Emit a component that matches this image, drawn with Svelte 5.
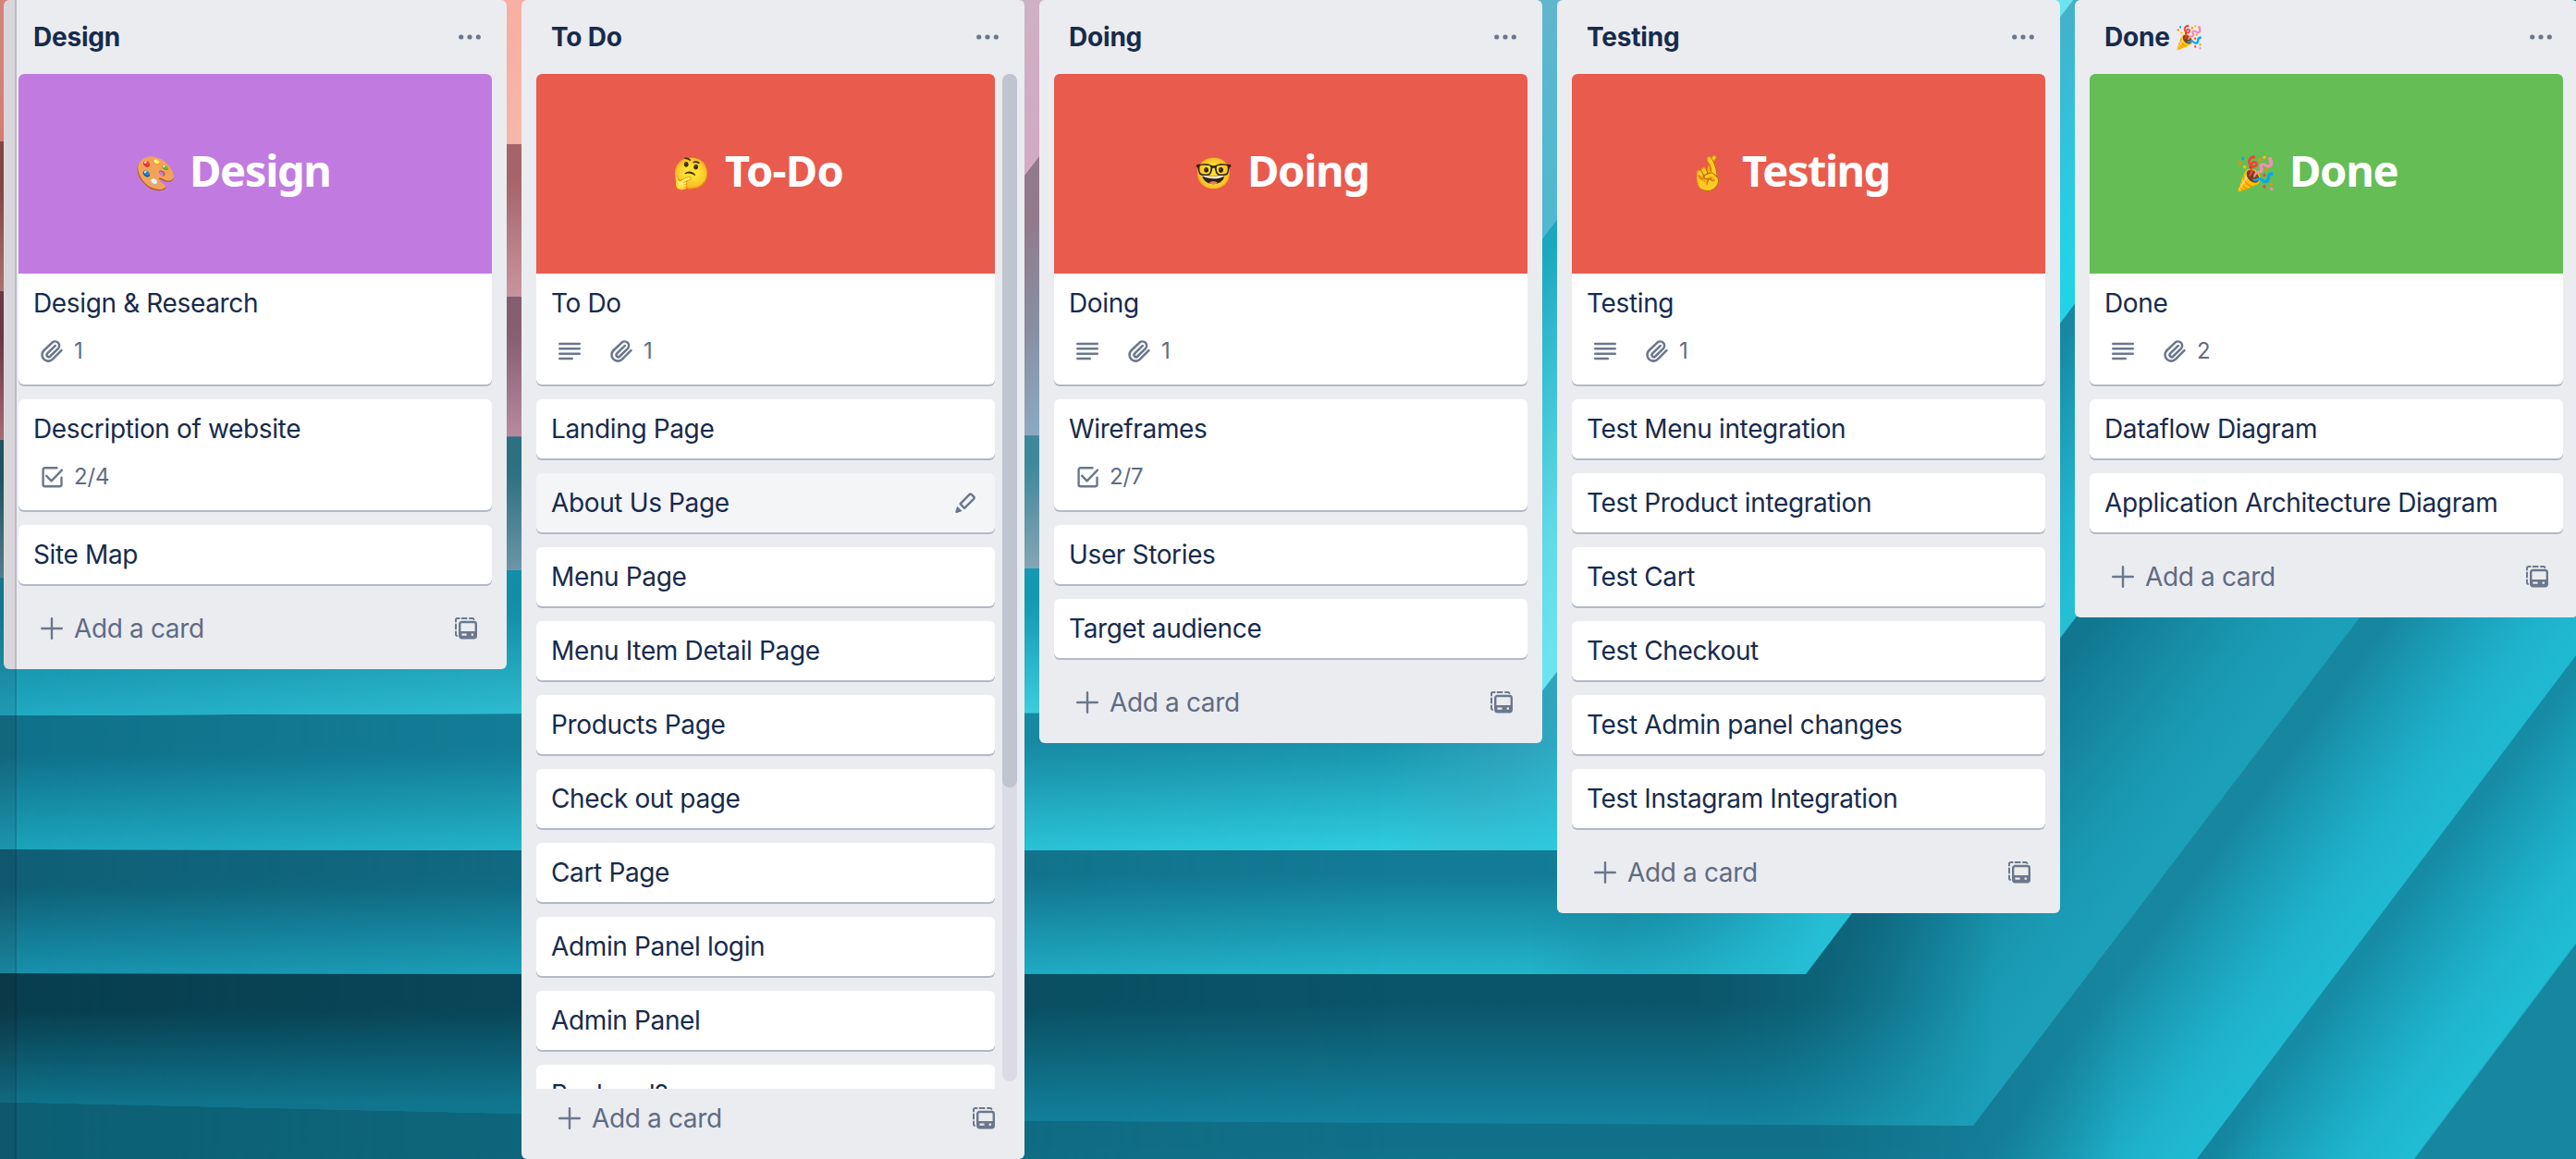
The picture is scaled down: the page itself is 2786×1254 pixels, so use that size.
<script>
  const lists = [
    {
      title: 'Design',
      cover: { tone: 'purple', emoji: '🎨', label: 'Design', kind: 'design' },
      cards: [
        { title: 'Design & Research', cover: true, files: 1 },
        { title: 'Description of website', checks: '2/4' },
        { title: 'Site Map' }
      ]
    },
    {
      title: 'To Do',
      scroll: true,
      cover: { tone: 'red', emoji: '🤔', label: 'To-Do', kind: 'todo' },
      cards: [
        { title: 'To Do', cover: true, text: true, files: 1 },
        { title: 'Landing Page' },
        { title: 'About Us Page', active: true },
        { title: 'Menu Page' },
        { title: 'Menu Item Detail Page' },
        { title: 'Products Page' },
        { title: 'Check out page' },
        { title: 'Cart Page' },
        { title: 'Admin Panel login' },
        { title: 'Admin Panel' },
        { title: 'Backend?' }
      ]
    },
    {
      title: 'Doing',
      cover: { tone: 'red', emoji: '🤓', label: 'Doing', kind: 'doing' },
      cards: [
        { title: 'Doing', cover: true, text: true, files: 1 },
        { title: 'Wireframes', checks: '2/7' },
        { title: 'User Stories' },
        { title: 'Target audience' }
      ]
    },
    {
      title: 'Testing',
      cover: { tone: 'red', emoji: '🤞', label: 'Testing', kind: 'testing' },
      cards: [
        { title: 'Testing', cover: true, text: true, files: 1 },
        { title: 'Test Menu integration' },
        { title: 'Test Product integration' },
        { title: 'Test Cart' },
        { title: 'Test Checkout' },
        { title: 'Test Admin panel changes' },
        { title: 'Test Instagram Integration' }
      ]
    },
    {
      title: 'Done',
      suffix: '🎉',
      cover: { tone: 'green', emoji: '🎉', label: 'Done', kind: 'done' },
      cards: [
        { title: 'Done', cover: true, text: true, files: 2 },
        { title: 'Dataflow Diagram' },
        { title: 'Application Architecture Diagram' }
      ]
    }
  ];

  // Folded paper sheets, outermost first. Each has a bottom edge (yl..y), a corner
  // at (x, y) and a diagonal rising to (tx, 0). `top` is where the sheet above ends.
  const sheets = [
    { yl: 1600, y: 1600, x: 2352, tx: 3552, top: 1400, w: 190, l: ['#0f6b80', '#0f6b80'], r: ['#0f6b80', '#0f6b80'], d: ['#1786a0', '#1aa3bc'] },
    { yl: 1500, y: 1500, x: 2426, tx: 3551, top: 1300, w: 185, l: ['#0f6b80', '#0f6b80'], r: ['#0f6b80', '#0f6b80'], d: ['#168ba6', '#20bcd4'] },
    { yl: 1400, y: 1400, x: 2266, tx: 3319, top: 1198, w: 195, l: ['#0d5f73', '#128aa5'], r: ['#117089', '#128aa5'], d: ['#1786a1', '#20b9d2'] },
    { yl: 1192, y: 1218, x: 2134, tx: 3060, top: 1053, w: 240, l: ['#083e4f', '#0f7289'], r: ['#0b5569', '#1484a0'], d: ['#11768f', '#1ca0ba'] },
    { yl: 1053, y: 1054, x: 1953, tx: 2750, top: 919, w: 205, l: ['#0f5f76', '#1790ab'], r: ['#137b95', '#22b5cc'], d: ['#1787a2', '#25bfd5'] },
    { yl: 919, y: 920, x: 1800, tx: 2490, top: 773, w: 205, l: ['#107089', '#1ba3bc'], r: ['#1993ac', '#2fcde0'], d: ['#45b0ca', '#22d3e8'] },
    { yl: 774, y: 771, x: 1650, tx: 2242, top: 620, w: 300, l: ['#10829c', '#1fa9c2'], r: ['#17a0b9', '#45d8e6'], d: ['#1ba7c0', '#6ce4ef'] },
    { yl: 625, y: 614, x: 1395, tx: 1866, top: 473, w: 245, l: ['#1c5b6b', '#55889b'], r: ['#3f889d', '#88a9b7'], d: ['#70b3ca', '#50b8d0'] },
    { yl: 476, y: 471, x: 1190, tx: 1550, top: 322, w: 215, l: ['#733b4c', '#b4747f'], r: ['#93798c', '#bc9dba'], d: ['#93798c', '#74b6cc'] },
    { yl: 314, y: 322, x: 1006, tx: 1254, top: 155, w: 160, l: ['#8b4a50', '#b9787d'], r: ['#b07074', '#cfa0b0'], d: ['#cdb5c6', '#d2aac4'] },
    { yl: 153, y: 156, x: 830, tx: 950, top: 0, w: 500, l: ['#e58f83', '#e58878'], r: ['#fbb3a8', '#f9bcb0'], d: ['#f8b8ac', '#f9c4ba'] }
  ];

  function outline(s) {
    return `M-10 -10 L${s.tx + 8} -10 L${s.x} ${s.y} L${s.x * 0.4} ${s.y + (s.yl - s.y) * 0.25} L-10 ${s.yl} Z`;
  }

  // Gradient vector perpendicular to a sheet's diagonal, pointing inwards.
  function across(s) {
    const dx = s.tx - s.x;
    const len = Math.hypot(dx, s.y);
    return { x2: s.x - (s.y / len) * s.w, y2: s.y - (dx / len) * s.w };
  }
</script>

{#snippet textIcon()}
  <svg class="icon" viewBox="0 0 24 24"><path d="M1.2 4h21.6M1.2 9.3h21.6M1.2 14.7h21.6M1.2 20h13.6" /></svg>
{/snippet}

{#snippet clipIcon()}
  <svg class="icon" viewBox="0.8 0.8 22.6 22.6"><path d="M21.9 11.3l-8.9 8.9a6.2 6.2 0 0 1-9-8.8l8.600-8.200a4.300 4.300 0 0 1 6.200 5.900l-8.300 8.200a2 2 0 0 1-2.900-2.900l8-7.900" /></svg>
{/snippet}

{#snippet checkIcon()}
  <svg class="icon" viewBox="0 0 24 24"><path d="M17.5 2.3H4.600a2 2 0 0 0-2 2v15.900a2 2 0 0 0 2 2h15.900a2 2 0 0 0 2-2v-7.400M6.200 10.800l5.400 5.600L23 4.600" /></svg>
{/snippet}

{#snippet templateIcon()}
  <svg class="icon" viewBox="0 0 24 24">
    <path class="dashes" d="M1 4.4V2.6A1.6 1.6 0 0 1 2.6 1h2M7.6 1h5M16 1h2.8a1.6 1.6 0 0 1 1.6 1M1 7.4v5.2M1 15.6v2.8a1.6 1.6 0 0 0 1 1.5" />
    <rect x="5.2" y="5" width="17.6" height="17.2" rx="2.2" />
    <path class="solid" fill-rule="evenodd" d="M5 15h18v7H5zM7.4 17.6h5.2v2.2H7.4zM17.6 17.6h2.4v2.2h-2.4z" />
  </svg>
{/snippet}

<div class="board">
  <svg class="backdrop" viewBox="0 0 2786 1254" preserveAspectRatio="none" aria-hidden="true">
    <defs>
      {#each sheets as s, i}
        {@const g = across(s)}
        <linearGradient id="d{i}" gradientUnits="userSpaceOnUse" x1={s.x} y1={s.y} x2={g.x2} y2={g.y2}>
          <stop offset="0.05" stop-color={s.d[1]} />
          <stop offset="0.3" stop-color={s.d[1]} stop-opacity="0.85" />
          <stop offset="0.95" stop-color={s.d[0]} />
        </linearGradient>
        <linearGradient id="r{i}" gradientUnits="userSpaceOnUse" x1="0" y1={s.top} x2="0" y2={s.y}>
          <stop offset="0.2" stop-color={s.r[0]} />
          <stop offset="1" stop-color={s.r[1]} />
        </linearGradient>
        <linearGradient id="l{i}" gradientUnits="userSpaceOnUse" x1="0" y1={s.top} x2="0" y2={s.yl}>
          <stop offset="0.3" stop-color={s.l[0]} />
          <stop offset="1" stop-color={s.l[1]} />
        </linearGradient>
        <linearGradient id="f{i}" gradientUnits="userSpaceOnUse" x1={s.x - 300} y1="0" x2={s.x + 20} y2="0">
          <stop offset="0" stop-color="#fff" />
          <stop offset="1" stop-color="#000" />
        </linearGradient>
        <linearGradient id="g{i}" gradientUnits="userSpaceOnUse" x1="0" y1="0" x2={Math.min(1500, s.x - 200)} y2="0">
          <stop offset="0" stop-color="#fff" />
          <stop offset="1" stop-color="#000" />
        </linearGradient>
        <mask id="m{i}" maskUnits="userSpaceOnUse" x="-10" y="-10" width="3600" height="1700">
          <rect x="-10" y="-10" width="3600" height="1700" fill="url(#f{i})" />
        </mask>
        <mask id="n{i}" maskUnits="userSpaceOnUse" x="-10" y="-10" width="3600" height="1700">
          <rect x="-10" y="-10" width="3600" height="1700" fill="url(#g{i})" />
        </mask>
      {/each}
    </defs>
    <rect width="2786" height="1254" fill="#1787a1" />
    {#each sheets as s, i}
      <path d={outline(s)} fill={s.d[0]} />
      <path d={outline(s)} fill="url(#d{i})" />
      <path d={outline(s)} fill="url(#r{i})" mask="url(#m{i})" />
      <path d={outline(s)} fill="url(#l{i})" mask="url(#n{i})" />
    {/each}
  </svg>

  <main class="lists">
    {#each lists as list}
      <section class="list" class:scroll={list.scroll}>
        <header class="list-head">
          <h2>{list.title}{#if list.suffix}<span class="suffix">{list.suffix}</span>{/if}</h2>
          <svg class="more" viewBox="0 0 24 6"><circle cx="2.7" cy="3" r="2.6" /><circle cx="12" cy="3" r="2.6" /><circle cx="21.3" cy="3" r="2.6" /></svg>
        </header>
        <div class="list-body">
          <div class="cards">
            {#each list.cards as card}
              <article class="card" class:active={card.active}>
                {#if card.cover}
                  <div class="cover {list.cover.tone} {list.cover.kind}">
                    <span class="emoji">{list.cover.emoji}</span>
                    <span class="label">{list.cover.label}</span>
                  </div>
                {/if}
                <div class="card-body">
                  <div class="card-title">
                    <span>{card.title}</span>
                    {#if card.active}
                      <svg class="pencil" viewBox="0 0 24 24">
                        <path d="M6.6 13.2L16.4 3.1a1.7 1.7 0 0 1 2.400 0l2.300 2.300a1.700 1.700 0 0 1 0 2.400L11 17.800z" />
                        <path class="solid" d="M3.200 15.800l5.400 5.200-5.800 1.900c-1.100.3-1.800-.3-1.500-1.400z" />
                      </svg>
                    {/if}
                  </div>
                  {#if card.text || card.files || card.checks}
                    <div class="badges">
                      {#if card.text}<span class="badge">{@render textIcon()}</span>{/if}
                      {#if card.files}<span class="badge">{@render clipIcon()}{card.files}</span>{/if}
                      {#if card.checks}<span class="badge">{@render checkIcon()}{card.checks}</span>{/if}
                    </div>
                  {/if}
                </div>
              </article>
            {/each}
          </div>
          {#if list.scroll}
            <div class="track"><div class="thumb"></div></div>
          {/if}
        </div>
        <footer class="list-foot">
          <svg class="icon" viewBox="0 0 24 24"><path d="M12 1.2v21.6M1.2 12h21.6" /></svg>
          <span class="add">Add a card</span>
          {@render templateIcon()}
        </footer>
      </section>
    {/each}
  </main>

  <div class="drawer-edge"></div>
</div>

<style>
  :global(body) {
    margin: 0;
    overflow: hidden;
  }
  .board {
    position: relative;
    width: 100vw;
    height: 100vh;
    overflow: hidden;
    font-family: Inter, 'Liberation Sans', sans-serif;
    font-size: 28px;
    line-height: 40px;
    letter-spacing: -0.36px;
    color: #172b4d;
  }
  .backdrop {
    position: absolute;
    inset: 0;
    width: 100%;
    height: 100%;
  }
  .lists {
    position: relative;
    display: flex;
    align-items: flex-start;
    gap: 16px;
    height: 100%;
    padding-left: 4px;
  }
  .list {
    display: flex;
    flex: 0 0 544px;
    flex-direction: column;
    max-height: 100%;
    background: #ebecf0;
    border-radius: 6px;
  }
  .list-head {
    display: flex;
    flex: none;
    align-items: center;
    justify-content: space-between;
    box-sizing: border-box;
    height: 80px;
    padding: 0 28px 0 32px;
  }
  h2 {
    display: flex;
    align-items: center;
    margin: 0;
    font-size: 28px;
    font-weight: 650;
    letter-spacing: -0.2px;
  }
  .suffix {
    margin-left: 5px;
    font-size: 25px;
    line-height: 36px;
  }
  .more {
    width: 24px;
    height: 6px;
    fill: #6b778c;
  }
  .list-body {
    display: flex;
    min-height: 0;
    padding: 0 16px;
  }
  .scroll .list-body {
    gap: 8px;
    padding-right: 8px;
  }
  .cards {
    flex: 1;
    min-width: 0;
  }
  .scroll .cards {
    overflow: hidden;
  }
  .track {
    flex: none;
    width: 16px;
    margin-bottom: 8px;
    background: #dadbe3;
    border-radius: 8px;
  }
  .thumb {
    height: 772px;
    background: #bfc4ce;
    border-radius: 8px;
  }
  .card {
    margin-bottom: 16px;
    overflow: hidden;
    background: #fff;
    border-radius: 6px;
    box-shadow: 0 2px 0 #b2b9c7;
  }
  .card.active {
    background: #f4f5f7;
  }
  .card-body {
    padding: 12px 16px;
  }
  .card-title {
    display: flex;
    align-items: center;
    justify-content: space-between;
  }
  .pencil {
    width: 24px;
    height: 24px;
    margin-right: 4px;
    fill: none;
    stroke: #6b778c;
    stroke-width: 2.4;
    stroke-linejoin: round;
  }
  .badges {
    display: flex;
    gap: 32px;
    margin: 12px 0 4px 8px;
    font-size: 24px;
    letter-spacing: -0.2px;
    color: #5e6c84;
  }
  .badge {
    display: flex;
    gap: 12px;
    align-items: center;
    height: 40px;
  }
  .icon {
    flex: none;
    width: 24px;
    height: 24px;
    fill: none;
    stroke: #6b778c;
    stroke-width: 2.4;
    stroke-linecap: round;
    stroke-linejoin: round;
  }
  .icon .dashes {
    stroke-width: 2;
  }
  .pencil .solid,
  .icon .solid {
    fill: #6b778c;
    stroke: none;
  }
  .cover {
    display: flex;
    align-items: center;
    height: 216px;
    color: #fff;
    white-space: nowrap;
  }
  .purple { background: #c17be0; }
  .red { background: #e95b4d; }
  .green { background: #65bd55; }
  .emoji {
    display: flex;
    flex: none;
    justify-content: center;
    width: 44px;
    padding-bottom: 2px;
    font-size: 36px;
    line-height: 48px;
    letter-spacing: 0;
  }
  .label {
    padding-bottom: 8px;
    margin-left: 15px;
    font-family: 'Noto Sans', sans-serif;
    font-size: 47px;
    font-weight: 700;
    line-height: 64px;
    letter-spacing: -1.3px;
  }
  .design { padding-left: 126px; }
  .todo { padding-left: 145px; }
  .todo .emoji, .doing .emoji { font-size: 33px; }
  .todo .label { letter-spacing: -0.8px; }
  .doing { padding-left: 150px; }
  .testing { padding-left: 125px; }
  .testing .label { letter-spacing: -1.500px; }
  .done { padding-left: 157px; }
  .list-foot {
    display: flex;
    flex: none;
    gap: 12px;
    align-items: center;
    padding: 12px 32px 24px 40px;
    color: #5e6c84;
  }
  .add {
    flex: 1;
  }
  .drawer-edge {
    position: absolute;
    inset: 0 auto 0 0;
    box-sizing: border-box;
    width: 18px;
    background: rgba(40, 10, 10, 0.09);
    border-right: 2px solid rgba(9, 30, 66, 0.15);
  }
</style>
